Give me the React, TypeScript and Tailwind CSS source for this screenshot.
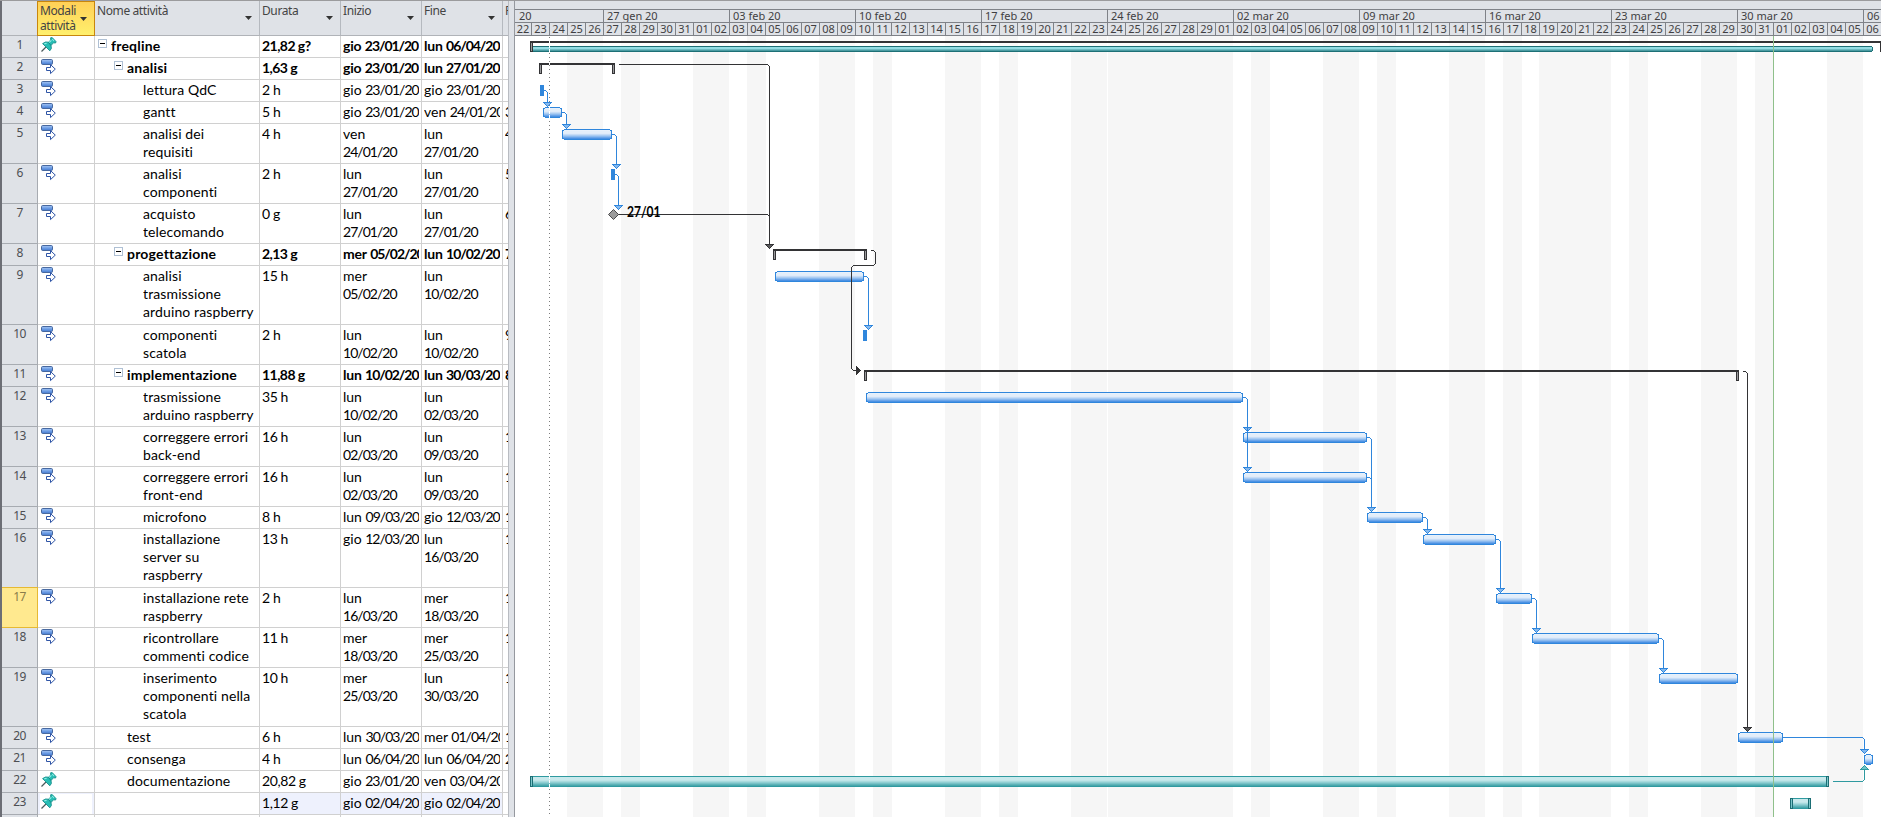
import React from "react";

type Task = {
  h: number;
  name: string[];
  level: number;
  dur: string;
  start: string;
  end: string;
  wrapStart?: boolean;
  wrapEnd?: boolean;
  pred?: string;
  bold?: boolean;
  pin?: boolean;
};

const TASKS: Task[] = [
  { h: 22, name: ["freqline"], level: 1, dur: "21,82 g?", start: "gio 23/01/20", end: "lun 06/04/20", bold: true, pin: true },
  { h: 22, name: ["analisi"], level: 2, dur: "1,63 g", start: "gio 23/01/20", end: "lun 27/01/20", bold: true },
  { h: 22, name: ["lettura QdC"], level: 3, dur: "2 h", start: "gio 23/01/20", end: "gio 23/01/20" },
  { h: 22, name: ["gantt"], level: 3, dur: "5 h", start: "gio 23/01/20", end: "ven 24/01/20", pred: "3" },
  { h: 40, name: ["analisi dei", "requisiti"], level: 3, dur: "4 h", start: "ven 24/01/20", end: "lun 27/01/20", wrapStart: true, wrapEnd: true, pred: "4" },
  { h: 40, name: ["analisi", "componenti"], level: 3, dur: "2 h", start: "lun 27/01/20", end: "lun 27/01/20", wrapStart: true, wrapEnd: true, pred: "5" },
  { h: 40, name: ["acquisto", "telecomando"], level: 3, dur: "0 g", start: "lun 27/01/20", end: "lun 27/01/20", wrapStart: true, wrapEnd: true, pred: "6" },
  { h: 22, name: ["progettazione"], level: 2, dur: "2,13 g", start: "mer 05/02/20", end: "lun 10/02/20", pred: "7", bold: true },
  { h: 59, name: ["analisi", "trasmissione", "arduino raspberry"], level: 3, dur: "15 h", start: "mer 05/02/20", end: "lun 10/02/20", wrapStart: true, wrapEnd: true },
  { h: 40, name: ["componenti", "scatola"], level: 3, dur: "2 h", start: "lun 10/02/20", end: "lun 10/02/20", wrapStart: true, wrapEnd: true, pred: "9" },
  { h: 22, name: ["implementazione"], level: 2, dur: "11,88 g", start: "lun 10/02/20", end: "lun 30/03/20", pred: "8", bold: true },
  { h: 40, name: ["trasmissione", "arduino raspberry"], level: 3, dur: "35 h", start: "lun 10/02/20", end: "lun 02/03/20", wrapStart: true, wrapEnd: true },
  { h: 40, name: ["correggere errori", "back-end"], level: 3, dur: "16 h", start: "lun 02/03/20", end: "lun 09/03/20", wrapStart: true, wrapEnd: true, pred: "1" },
  { h: 40, name: ["correggere errori", "front-end"], level: 3, dur: "16 h", start: "lun 02/03/20", end: "lun 09/03/20", wrapStart: true, wrapEnd: true, pred: "1" },
  { h: 22, name: ["microfono"], level: 3, dur: "8 h", start: "lun 09/03/20", end: "gio 12/03/20", pred: "1" },
  { h: 59, name: ["installazione", "server su", "raspberry"], level: 3, dur: "13 h", start: "gio 12/03/20", end: "lun 16/03/20", wrapEnd: true, pred: "1" },
  { h: 40, name: ["installazione rete", "raspberry"], level: 3, dur: "2 h", start: "lun 16/03/20", end: "mer 18/03/20", wrapStart: true, wrapEnd: true, pred: "1" },
  { h: 40, name: ["ricontrollare", "commenti codice"], level: 3, dur: "11 h", start: "mer 18/03/20", end: "mer 25/03/20", wrapStart: true, wrapEnd: true, pred: "1" },
  { h: 59, name: ["inserimento", "componenti nella", "scatola"], level: 3, dur: "10 h", start: "mer 25/03/20", end: "lun 30/03/20", wrapStart: true, wrapEnd: true, pred: "1" },
  { h: 22, name: ["test"], level: 2, dur: "6 h", start: "lun 30/03/20", end: "mer 01/04/20", pred: "1" },
  { h: 22, name: ["consenga"], level: 2, dur: "4 h", start: "lun 06/04/20", end: "lun 06/04/20", pred: "2" },
  { h: 22, name: ["documentazione"], level: 2, dur: "20,82 g", start: "gio 23/01/20", end: "ven 03/04/20", pin: true },
  { h: 22, name: [], level: 2, dur: "1,12 g", start: "gio 02/04/20", end: "gio 02/04/20", pin: true },
];

const PinIcon = () => (
  <svg width="16" height="16" viewBox="0 0 16 16" className="mt-px ml-[3px] block">
    <path d="M0.5 14.5 L5 10" stroke="#4a5a5c" strokeWidth="1.2" />
    <path d="M1.6 6.6 L4.6 5 L7.4 5.2 L9.8 3 L9.6 0.8 L11.2 0.6 L15 4.6 L14.6 6 L12.4 5.8 L10 8.6 L10.4 11.4 L8.8 13.8 Z" fill="#27bdb4" stroke="#168f8b" strokeWidth="0.9" strokeLinejoin="round" />
    <path d="M3.2 6.8 L5.6 6.4 M8 5.6 L10.4 3.4 M11.2 2 L13 4" stroke="#8ff0e6" strokeWidth="1.1" />
    <path d="M7.4 5.2 L10 8.6" stroke="#11837f" strokeWidth="0.9" />
  </svg>
);

const AutoIcon = () => (
  <svg width="16" height="17" viewBox="0 0 16 17" className="mt-px ml-[3px] block">
    <defs>
      <linearGradient id="pill" x1="0" y1="0" x2="0" y2="1">
        <stop offset="0" stopColor="#a9c8f4" />
        <stop offset="0.5" stopColor="#6f9fe6" />
        <stop offset="1" stopColor="#4278cf" />
      </linearGradient>
    </defs>
    <rect x="0.5" y="0.5" width="11" height="5" rx="1.2" fill="url(#pill)" stroke="#47689f" />
    <path d="M5.5 8.5 H9.5 V5.6 L14.3 10.1 L9.5 14.6 V11.5 H5.5 Z" fill="#fff" stroke="#2f55a6" strokeWidth="1" />
  </svg>
);

const Caret = () => (
  <svg width="7" height="4" viewBox="0 0 7 4" className="mt-[15px] block shrink-0">
    <path d="M0 0 H7 L3.5 4 Z" fill="#333" />
  </svg>
);

const HeadCell = ({ w, children }: { w: string; children: React.ReactNode }) => (
  <div className={`${w} flex shrink-0 justify-between overflow-hidden border-r border-[#b5b9bf] pr-[7px] pl-[2px]`}>
    <span className="pt-[2px] tracking-[-0.4px] whitespace-nowrap">{children}</span>
    <Caret />
  </div>
);

const Lines = ({ items }: { items: string[] }) => (
  <div className="overflow-hidden pt-px whitespace-nowrap">
    {items.map((l, i) => (
      <div key={i}>{l}</div>
    ))}
  </div>
);

const DateCell = ({ value, wrap, bold, tint }: { value: string; wrap?: boolean; bold?: boolean; tint: string }) => {
  const [day, date] = value.split(" ");
  return (
    <div className={`w-[81px] shrink-0 border-r border-b border-[#d0d0d0] pr-[2px] pl-[2px] ${bold ? "font-bold" : ""} ${tint}`}>
      <div className="overflow-hidden pt-px whitespace-nowrap">
        <span className={bold ? "tracking-[-0.2px]" : ""}>{day}</span>
        {wrap ? <br /> : " "}
        <span className={bold ? "tracking-[-1.05px]" : "tracking-[-0.98px]"}>{date}</span>
      </div>
    </div>
  );
};

const INDENT: Record<number, string> = { 1: "pl-[16px]", 2: "pl-[32px]", 3: "pl-[48px]" };

const Row = ({ t, n }: { t: Task; n: number }) => {
  const last = n === 23;
  const selected = n === 17;
  const tint = last ? "bg-[#eef1fd]" : "";
  const numTone = selected
    ? "bg-[#ffe98f] text-[#8a7c4a] border-[#e6b933] shadow-[0_-1px_0_#e6b933]"
    : "bg-[#dfe2e7] text-[#4d4f53] border-[#a7abb1]";
  return (
    <div className="flex shrink-0" style={{ height: t.h }}>
      <div className={`w-[36px] shrink-0 border-r border-b text-center font-['Noto_Sans',sans-serif] text-[12px] leading-[18px] tracking-[-0.7px] ${numTone}`}>
        {n}
      </div>
      <div className={`w-[57px] shrink-0 border-r border-b border-[#d0d0d0] ${last ? "bg-[#eef1fd] px-[2px] py-px" : ""}`}>
        {last ? (
          <div className="-mt-px h-[20px] bg-white">
            <div className="-ml-[2px]">
              <PinIcon />
            </div>
          </div>
        ) : t.pin ? (
          <PinIcon />
        ) : (
          <AutoIcon />
        )}
      </div>
      <div className={`relative w-[165px] shrink-0 border-r border-b border-[#d0d0d0] ${INDENT[t.level]} ${t.bold ? "font-bold tracking-[0.2px]" : "tracking-[0.12px]"}`}>
        {t.bold && (
          <span className={`absolute top-[3px] flex size-[9px] items-center justify-center border border-[#afc0d4] bg-white ${t.level === 1 ? "left-[3px]" : "left-[19px]"}`}>
            <span className="h-px w-[5px] bg-black" />
          </span>
        )}
        <Lines items={t.name} />
      </div>
      <div className={`w-[81px] shrink-0 border-r border-b border-[#d0d0d0] pl-[2px] ${t.bold ? "font-bold tracking-[-0.55px]" : "tracking-[-0.4px]"} ${tint}`}>
        <Lines items={[t.dur]} />
      </div>
      <DateCell value={t.start} wrap={t.wrapStart} bold={t.bold} tint={tint} />
      <DateCell value={t.end} wrap={t.wrapEnd} bold={t.bold} tint={tint} />
      <div className={`w-[5px] shrink-0 border-b border-[#d0d0d0] pl-[2px] ${t.bold ? "font-bold" : ""}`}>
        <Lines items={[t.pred ?? ""]} />
      </div>
    </div>
  );
};

const WEEKS = ["27 gen 20", "03 feb 20", "10 feb 20", "17 feb 20", "24 feb 20", "02 mar 20", "09 mar 20", "16 mar 20", "23 mar 20", "30 mar 20"];

const dayLabels = () => {
  const out: string[] = [];
  const d = new Date(Date.UTC(2020, 0, 22));
  for (let i = 0; i < 76; i++) {
    out.push(String(d.getUTCDate()).padStart(2, "0"));
    d.setUTCDate(d.getUTCDate() + 1);
  }
  return out;
};

const SHADES: [number, number][] = [
  [567, 36], [621, 19], [693, 36], [747, 19], [819, 36], [873, 19], [945, 36], [999, 19],
  [1071, 36], [1108, 125], [1251, 19], [1323, 36], [1377, 19], [1449, 36], [1503, 19],
  [1539, 72], [1629, 19], [1701, 36], [1755, 19], [1827, 36],
];

const BLUE = ["#e8f1fb", "#e3eefa", "#e3eefa", "#dfebfa", "#c6dcf6", "#aaccf2", "#8cbaef", "#6ba5e9", "#4b91e3"];
const TEAL = ["#c9e9ec", "#c9e9ec", "#c9e9ec", "#bfe5e8", "#a8dadd", "#90ced2", "#78c1c6", "#5eb3b8", "#48a6ab"];

const Bar = ({ a, b, y, teal }: { a: number; b: number; y: number; teal?: boolean }) => {
  const c = teal ? "#2f9aa0" : "#2f86dc";
  return (
    <g>
      {(teal ? TEAL : BLUE).map((f, i) => (
        <rect key={i} x={a + 1} y={y + 1 + i} width={b - a - 2} height="1" fill={f} />
      ))}
      <path
        fill={c}
        d={`M${a + 2} ${y}H${b - 2}V${y + 1}H${b}V${y + 10}H${b - 2}V${y + 11}H${a + 2}V${y + 10}H${a}V${y + 1}H${a + 2}ZM${a + 2} ${y + 1}V${y + 2}H${a + 1}V${y + 9}H${a + 2}V${y + 10}H${b - 2}V${y + 9}H${b - 1}V${y + 2}H${b - 2}V${y + 1}Z`}
        fillRule="evenodd"
      />
    </g>
  );
};

const Cap = ({ x, y, teal }: { x: number; y: number; teal?: boolean }) => (
  <g>
    <rect x={x} y={y} width="3" height="11" fill={teal ? "#1c6e74" : "#333335"} />
    <rect x={x + 1} y={y + (teal ? 1 : 2)} width="1" height={teal ? 9 : 8} fill={teal ? "#7cc6cb" : "#9a9a9c"} />
  </g>
);

const Summary = ({ a, b, y }: { a: number; b: number; y: number }) => (
  <g>
    <rect x={a} y={y} width={b - a} height="2" fill="#333335" />
    <Cap x={a} y={y} />
    <Cap x={b - 3} y={y} />
  </g>
);

const Arrow = ({ x, y, fill, edge, up }: { x: number; y: number; fill: string; edge: string; up?: boolean }) => (
  <g>
    {[4, 3, 2, 1, 0].map((r, i) => {
      const yy = up ? y - i : y + i;
      return (
        <g key={i}>
          <rect x={x - r} y={yy} width={2 * r + 1} height="1" fill={edge} />
          {i > 0 && r > 0 && <rect x={x - r + 1} y={yy} width={2 * r - 1} height="1" fill={fill} />}
        </g>
      );
    })}
  </g>
);

const Link = ({ from, y, x, to, head = true }: { from: number; y: number; x: number; to: number; head?: boolean }) => (
  <g>
    <rect x={from} y={y} width={x - from - 1} height="1" fill="#2f86dc" />
    <rect x={x - 1} y={y + 1} width="1" height="1" fill="#2f86dc" />
    {head && <rect x={x} y={y + 2} width="1" height={to - y - 2} fill="#2f86dc" />}
    {head && <Arrow x={x} y={to} fill="#84b8ee" edge="#2f86dc" />}
  </g>
);

const Chart = () => (
  <svg width="1366" height="781" viewBox="515 36 1366 781" shapeRendering="crispEdges" className="block">
    <rect x="515" y="36" width="1366" height="781" fill="#fff" />
    {SHADES.map(([x, w]) => (
      <rect key={x} x={x} y="36" width={w} height="781" fill="#f6f6f6" />
    ))}

    <rect x="530" y="41" width="1351" height="2" fill="#333335" />
    <rect x="533" y="43" width="1347" height="3" fill="#fff" opacity="0.6" />
    <rect x="532" y="46" width="1340" height="6" fill="#1d7076" />
    <rect x="532" y="47" width="1341" height="4" fill="#1d7076" />
    <rect x="533" y="47" width="1339" height="2" fill="#93dce3" />
    <rect x="533" y="49" width="1339" height="1" fill="#6cb9c0" />
    <rect x="533" y="50" width="1339" height="1" fill="#4a9ba2" />
    <Cap x={530} y={41} />
    <rect x="1880" y="41" width="1" height="11" fill="#333335" />

    <Summary a={539} b={615} y={63} />
    <Summary a={773} b={867} y={249} />
    <Summary a={864} b={1739} y={370} />

    <rect x="540" y="85" width="4" height="11" fill="#2f86dc" />
    <Bar a={543} b={562} y={107} />
    <Bar a={562} b={612} y={129} />
    <rect x="611" y="169" width="4" height="11" fill="#2f86dc" />
    <Bar a={775} b={864} y={271} />
    <rect x="863" y="330" width="4" height="11" fill="#2f86dc" />
    <Bar a={866} b={1243} y={392} />
    <Bar a={1243} b={1367} y={432} />
    <Bar a={1243} b={1367} y={472} />
    <Bar a={1367} b={1423} y={512} />
    <Bar a={1423} b={1496} y={534} />
    <Bar a={1496} b={1532} y={593} />
    <Bar a={1532} b={1659} y={633} />
    <Bar a={1659} b={1738} y={673} />
    <Bar a={1738} b={1783} y={732} />
    <Bar a={1864} b={1873} y={754} />
    <Bar a={530} b={1829} y={776} teal />
    <Cap x={530} y={776} teal />
    <Cap x={1826} y={776} teal />
    <Bar a={1790} b={1811} y={798} teal />
    <Cap x={1790} y={798} teal />
    <Cap x={1808} y={798} teal />

    <Link from={544} y={90} x={547} to={102} />
    <Link from={562} y={112} x={566} to={124} />
    <Link from={612} y={134} x={616} to={164} />
    <Link from={615} y={174} x={618} to={205} />
    <Link from={864} y={276} x={868} to={325} />
    <Link from={1243} y={397} x={1247} to={427} />
    <Link from={1243} y={397} x={1247} to={467} />
    <Link from={1367} y={437} x={1371} to={507} />
    <Link from={1367} y={477} x={1371} to={507} head={false} />
    <Link from={1423} y={517} x={1427} to={529} />
    <Link from={1496} y={539} x={1500} to={588} />
    <Link from={1532} y={598} x={1536} to={628} />
    <Link from={1659} y={638} x={1663} to={668} />
    <Link from={1783} y={737} x={1864} to={749} />

    <g fill="#333335">
      <rect x="619" y="64" width="149" height="1" />
      <rect x="768" y="65" width="1" height="1" />
      <rect x="769" y="66" width="1" height="178" />
      <rect x="618" y="214" width="150" height="1" />
      <rect x="768" y="215" width="1" height="1" />
      <rect x="871" y="250" width="3" height="1" />
      <rect x="874" y="251" width="1" height="1" />
      <rect x="875" y="252" width="1" height="12" />
      <rect x="874" y="264" width="1" height="1" />
      <rect x="853" y="265" width="21" height="1" />
      <rect x="852" y="266" width="1" height="1" />
      <rect x="851" y="267" width="1" height="102" />
      <rect x="852" y="369" width="1" height="1" />
      <rect x="853" y="370" width="3" height="1" />
      <path d="M856 366H857V367H858V368H859V369H860V370H861V371H860V372H859V373H858V374H857V375H856Z" />
      <rect x="1743" y="371" width="3" height="1" />
      <rect x="1746" y="372" width="1" height="1" />
      <rect x="1747" y="373" width="1" height="354" />
    </g>
    <Arrow x={769} y={244} fill="#5a5a5c" edge="#333335" />
    <Arrow x={1747} y={727} fill="#5a5a5c" edge="#333335" />

    <g fill="#2f9aa0">
      <rect x="1833" y="781" width="30" height="1" />
      <rect x="1863" y="780" width="1" height="1" />
      <rect x="1864" y="769" width="1" height="11" />
    </g>
    <Arrow x={1864} y={769} fill="#6cc4c9" edge="#2f9aa0" up />

    <path shapeRendering="auto" d="M613.5 209.5 L618.5 214.5 L613.5 219.5 L608.5 214.5 Z" fill="#9b9b9b" stroke="#4a4a4c" />
    <text x="627" y="217" textLength="33.5" lengthAdjust="spacingAndGlyphs" className="fill-black font-['Lato',sans-serif] text-[14.5px] font-bold">
      27/01
    </text>

    <path d="M549.5 37V817" stroke="#7d7d7d" strokeDasharray="1 3" />
    <path d="M549.5 41V52M549.5 63V65M549.5 107V118M549.5 776V787" stroke="#fff" strokeDasharray="3 1" />
    <rect x="1773" y="36" width="1" height="781" fill="#8fc08b" />
  </svg>
);

export default function App() {
  const days = dayLabels();
  return (
    <div className="flex h-[817px] w-[1881px] overflow-hidden border-t border-[#9b9b9d] bg-white font-['Lato','Liberation_Sans',sans-serif] text-[14px] leading-[18px] text-black">
      <div className="w-[2px] shrink-0 bg-[#6c6e75]" />
      <div className="flex w-[506px] shrink-0 flex-col overflow-hidden">
        <div className="flex h-[35px] shrink-0 border-b border-[#b0b3b8] bg-[#dfe2e7] font-['Noto_Sans',sans-serif] text-[12px] leading-[15px] text-[#444]">
          <div className="w-[35px] shrink-0" />
          <div className="-mb-px flex w-[58px] shrink-0 justify-between border border-[#c8860d] bg-linear-to-b from-[#ffd057] to-[#fff06d] pr-[7px] pl-[2px] tracking-[-0.4px]">
            <span className="pt-px whitespace-nowrap">
              Modali
              <br />
              attività
            </span>
            <Caret />
          </div>
          <HeadCell w="w-[165px]">Nome attività</HeadCell>
          <HeadCell w="w-[81px]">Durata</HeadCell>
          <HeadCell w="w-[81px]">Inizio</HeadCell>
          <HeadCell w="w-[81px]">Fine</HeadCell>
          <div className="w-[5px] shrink-0 overflow-hidden pt-[2px] pl-[2px]">P</div>
        </div>
        {TASKS.map((t, i) => (
          <Row key={i} t={t} n={i + 1} />
        ))}
        <div className="flex h-[2px]">
          <div className="w-[36px] border-r border-[#a7abb1] bg-[#dfe2e7]" />
          <div className="w-[57px] border-r border-[#d0d0d0]" />
          <div className="w-[165px] border-r border-[#d0d0d0]" />
          <div className="w-[81px] border-r border-[#d0d0d0]" />
          <div className="w-[81px] border-r border-[#d0d0d0]" />
          <div className="w-[81px] border-r border-[#d0d0d0]" />
        </div>
      </div>
      <div className="w-[7px] shrink-0 border-r border-l border-r-[#95989e] border-l-[#b9bcc2] bg-[#dfe2e7]" />
      <div className="flex w-[1366px] shrink-0 flex-col">
        <div className="flex h-[35px] shrink-0 flex-col bg-[#dfe2e7] font-['Noto_Sans',sans-serif] text-[11px] leading-[12px] text-[#3f3f42]">
          <div className="h-[9px] shrink-0 border-b border-[#7f8288]" />
          <div className="flex h-[13px] shrink-0 overflow-hidden border-b border-[#7f8288]">
            <div className="w-[89px] shrink-0 border-r border-[#7f8288] pl-[4px]">20</div>
            {WEEKS.map((w) => (
              <div key={w} className="w-[126px] shrink-0 border-r border-[#7f8288] pl-[3px]">
                {w}
              </div>
            ))}
            <div className="w-[17px] shrink-0 pl-[3px]">06</div>
          </div>
          <div className="flex h-[13px] shrink-0 overflow-hidden border-b border-[#7f8288]">
            {days.map((d, i) => (
              <div key={i} className={`${i === 0 ? "w-[17px]" : "w-[18px]"} shrink-0 border-r border-[#7f8288] text-center`}>
                {d}
              </div>
            ))}
          </div>
        </div>
        <Chart />
      </div>
    </div>
  );
}
